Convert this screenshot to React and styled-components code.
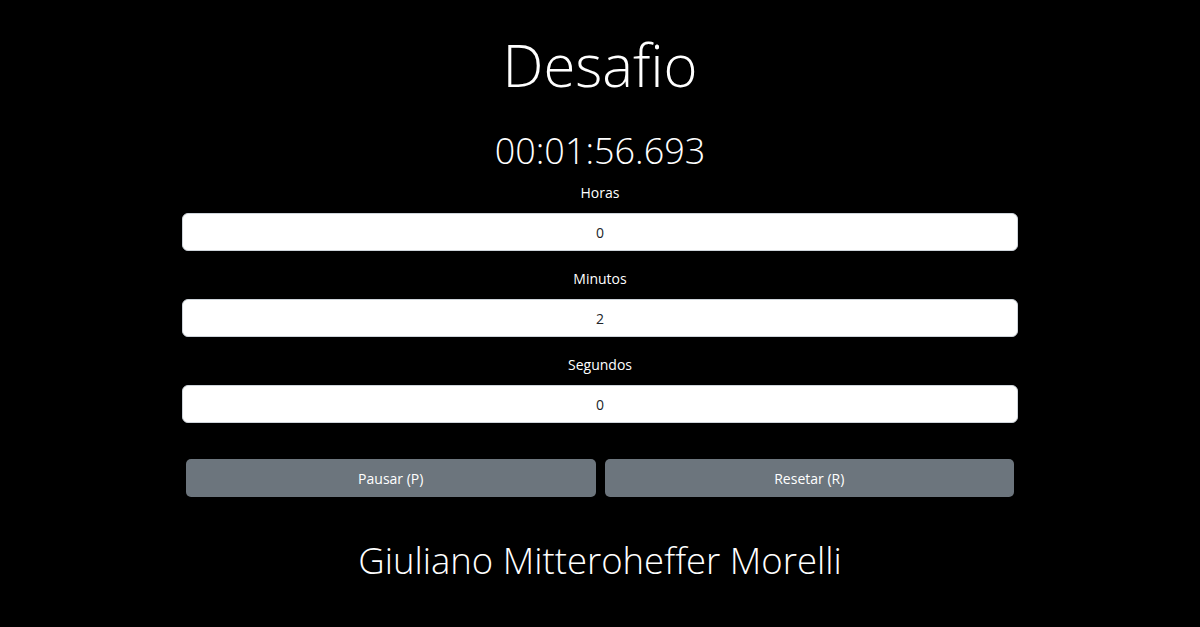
import React, { useState } from "react";
import styled, { createGlobalStyle } from "styled-components";

const GlobalStyle = createGlobalStyle`
  html, body {
    margin: 0;
    padding: 0;
    background: #000;
    color: #fff;
    font-family: "Open Sans", "Noto Sans", sans-serif;
    font-weight: 300;
  }
`;

const Page = styled.div`
  width: 836px;
  margin: 0 auto;
  display: flex;
  flex-direction: column;
  align-items: center;
`;

const Title = styled.h1`
  margin: 27px 0 0;
  font-size: 58px;
  font-weight: 300;
  line-height: 76px;
`;

const Timer = styled.div`
  margin: 21px 0 4px;
  font-size: 36px;
  line-height: 54px;
  font-weight: 300;
`;

const Field = styled.div`
  width: 100%;
  display: flex;
  flex-direction: column;
  align-items: center;
  gap: 9px;
  margin-bottom: 17px;
`;

const Label = styled.label`
  font-size: 14px;
  line-height: 22px;
  font-weight: 400;
`;

const Input = styled.input`
  box-sizing: border-box;
  width: 100%;
  height: 38px;
  border: 1px solid #ced4da;
  border-radius: 6px;
  background: #fff;
  color: #212529;
  text-align: center;
  font-family: "Open Sans", sans-serif;
  font-size: 14px;
  outline: none;
`;

const ButtonRow = styled.div`
  box-sizing: border-box;
  width: 100%;
  margin-top: 19px;
  padding: 0 4px;
  display: grid;
  grid-template-columns: 1fr 1fr;
  gap: 9px;
`;

const Button = styled.button`
  height: 38px;
  border: none;
  border-radius: 5px;
  background: #6c757d;
  color: #fff;
  font-family: "Open Sans", sans-serif;
  font-size: 14px;
  font-weight: 400;
  cursor: pointer;
`;

const Author = styled.div`
  margin-top: 38px;
  font-size: 36.5px;
  line-height: 50px;
  font-weight: 300;
`;

const fields = [
  { label: "Horas", value: "0" },
  { label: "Minutos", value: "2" },
  { label: "Segundos", value: "0" },
];

export default function App() {
  const [values, setValues] = useState(fields.map((f) => f.value));

  return (
    <>
      <GlobalStyle />
      <Page>
        <Title>Desafio</Title>
        <Timer>00:01:56.693</Timer>
        {fields.map((f, i) => (
          <Field key={f.label}>
            <Label>{f.label}</Label>
            <Input
              value={values[i]}
              onChange={(e) => {
                const next = [...values];
                next[i] = e.target.value;
                setValues(next);
              }}
            />
          </Field>
        ))}
        <ButtonRow>
          <Button>Pausar (P)</Button>
          <Button>Resetar (R)</Button>
        </ButtonRow>
        <Author>Giuliano Mitteroheffer Morelli</Author>
      </Page>
    </>
  );
}
